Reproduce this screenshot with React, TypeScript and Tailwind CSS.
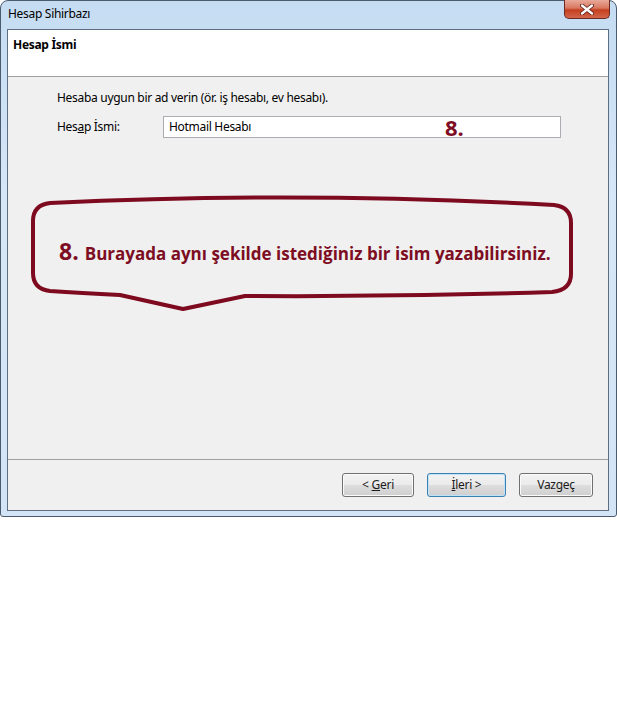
import React from "react";

const ui = { fontFamily: '"Noto Sans", "Open Sans", sans-serif', letterSpacing: "-0.3px" };
const callout = { fontFamily: '"Open Sans", "Noto Sans", sans-serif', letterSpacing: "0px" };

function WinButton({ children, primary, width }: { children: React.ReactNode; primary?: boolean; width: string }) {
  return (
    <button
      className={`${width} h-[24px] rounded-[3px] border text-[12px] text-[#1a1a1a] leading-none flex items-center justify-center ${
        primary
          ? "border-[#3c7fb1] shadow-[inset_0_0_0_1px_#bfe4fa] bg-[linear-gradient(#f2f2f2_0%,#ebebeb_50%,#dddddd_51%,#cfcfcf_100%)]"
          : "border-[#707070] shadow-[inset_0_0_0_1px_#fbfbfb] bg-[linear-gradient(#f2f2f2_0%,#ebebeb_50%,#dddddd_51%,#cfcfcf_100%)]"
      }`}
    >
      {children}
    </button>
  );
}

export default function App() {
  return (
    <div className="w-[617px] h-[705px] bg-white" style={ui}>
      <div className="relative w-[617px] h-[517px] rounded-t-[8px] rounded-b-[3px] border border-[#4a5b6e] bg-[linear-gradient(180deg,#c5dcf2_0%,#d6e7f8_40%,#d2e4f5_100%)] flex flex-col">
        {/* title bar */}
        <div className="h-[28px] flex items-start pl-[7px] pt-[5px] text-[12px] text-black leading-[16px]">
          Hesap Sihirbazı
        </div>
        <div className="absolute top-[-1px] right-[6px] w-[46px] h-[19px] rounded-b-[5px] border border-[#6b2b22] border-t-0 bg-[linear-gradient(180deg,#e9a99a_0%,#d8775f_45%,#c4401f_55%,#d2664a_100%)] flex items-center justify-center">
          <svg width="14" height="11" viewBox="0 0 14 11">
            <path d="M2 1.5 L12 9.5 M12 1.5 L2 9.5" stroke="#5a1a12" strokeWidth="4" strokeLinecap="round" />
            <path d="M2 1.5 L12 9.5 M12 1.5 L2 9.5" stroke="#ffffff" strokeWidth="2.4" strokeLinecap="round" />
          </svg>
        </div>

        {/* client area */}
        <div className="ml-[6px] mr-[7px] h-[482px] border border-[#5d6e80] bg-[#f0f0f0] flex flex-col">
          <div className="h-[47px] bg-white border-b border-[#a0a0a0] pl-[5px] pt-[7px]">
            <div className="text-[12px] font-bold leading-[16px] text-black">Hesap İsmi</div>
          </div>

          <div className="flex-1 pl-[49px] pt-[13px] text-[12px] text-black">
            <div className="leading-[16px]">Hesaba uygun bir ad verin (ör. iş hesabı, ev hesabı).</div>
            <div className="mt-[10px] flex items-center h-[22px]">
              <div className="w-[106px] leading-[16px]">
                Hes<span className="underline">a</span>p İsmi:
              </div>
              <div className="relative w-[398px] h-[22px] bg-white border border-[#abadb3] pl-[5px] flex items-center leading-[16px]">
                Hotmail Hesabı
                <span className="absolute left-[281px] top-[-3px] text-[22px] font-bold leading-[26px] text-[#7d0d22]" style={callout}>
                  8.
                </span>
              </div>
            </div>
          </div>

          <div className="h-[51px] border-t border-[#a0a0a0] flex justify-end items-start pt-[13px] pr-[15px] gap-[13px]">
            <WinButton width="w-[72px]">
              &lt; <span className="underline ml-[3px]">G</span>eri
            </WinButton>
            <WinButton width="w-[79px]" primary>
              <span className="underline">İ</span>leri &gt;
            </WinButton>
            <WinButton width="w-[74px]">Vazgeç</WinButton>
          </div>
        </div>

        {/* callout annotation */}
        <svg className="absolute left-[-1px] top-[-1px]" width="617" height="517" viewBox="0 0 617 517">
          <path
            d="M50 203 Q300 191 554 205 Q571 207 571 223 L571 274 Q571 290 552 292 Q400 297 245 296 L183 309 L120 295 Q80 293 50 291 Q33 289 33 273 L33 221 Q33 205 50 203 Z"
            fill="none"
            stroke="#7d0a1e"
            strokeWidth="4"
            strokeLinejoin="round"
          />
        </svg>
        <div className="absolute left-[58px] top-[236px] flex items-baseline text-[#7d0d22] font-bold whitespace-nowrap" style={callout}>
          <span className="text-[23px] leading-[28px]">8.</span>
          <span className="ml-[6px] text-[17px] leading-[28px]">Burayada aynı şekilde istediğiniz bir isim yazabilirsiniz.</span>
        </div>
      </div>
    </div>
  );
}
